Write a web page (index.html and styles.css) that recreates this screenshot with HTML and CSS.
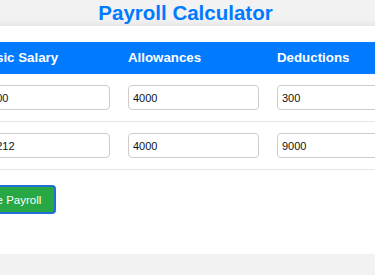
FILE: index.html
```html
<!DOCTYPE html>
<html lang="en">
    <head>
        <meta charset="UTF-8" />
        <title>Payroll Calculator</title>
        <link rel="stylesheet" href="styles.css">
    </head>
    <body>
        <h1>Payroll Calculator</h1>

        <div class="karta">
            <table class="mzdy">
                <thead>
                    <tr>
                        <th class="cislo">#</th>
                        <th>Basic Salary</th>
                        <th>Allowances</th>
                        <th>Deductions</th>
                    </tr>
                </thead>
                <tbody>
                    <tr>
                        <td class="cislo">1</td>
                        <td><input type="number" value="5000"></td>
                        <td><input type="number" value="4000"></td>
                        <td><input type="number" value="300"></td>
                    </tr>
                    <tr>
                        <td class="cislo">2</td>
                        <td><input type="number" value="41212"></td>
                        <td><input type="number" value="4000"></td>
                        <td><input type="number" value="9000"></td>
                    </tr>
                </tbody>
            </table>

            <button class="spocitat">Calculate Payroll</button>
        </div>
    </body>
</html>
```

FILE: styles.css
```css
body {
    margin: 0;
    background-color: #f2f2f2;
    font-family: "Liberation Sans", Arial, sans-serif;
    display: flex;
    flex-direction: column;
    align-items: center;
    overflow-x: hidden;
}

h1 {
    margin: 1px 0 2px 0;
    padding-right: 4px;
    font-size: 20.5px;
    line-height: 23px;
    color: #007bff;
    text-align: center;
    align-self: stretch;
}

.karta {
    flex: none;
    width: 499px;
    background-color: #fff;
    padding: 16px 20px 40px 20px;
    box-shadow: 0 0 8px rgba(0, 0, 0, 0.1);
}

.mzdy {
    width: 100%;
    border-collapse: collapse;
    table-layout: fixed;
}

.mzdy th {
    background-color: #007bff;
    color: #fff;
    font-size: 13.3px;
    line-height: 16px;
    text-align: left;
    padding: 8px 9px;
    width: 131px;
}

.mzdy th.cislo {
    width: 14px;
}

.mzdy th:last-child {
    width: auto;
}

.mzdy td {
    padding: 11px 9px;
    border-bottom: 1px solid #e6e6e6;
    font-size: 11px;
}

.mzdy input {
    box-sizing: border-box;
    width: 131px;
    height: 25px;
    padding: 0 4px;
    border: 1px solid #ccc;
    border-radius: 4px;
    font-family: "Liberation Sans", Arial, sans-serif;
    font-size: 11px;
    color: #111;
    -moz-appearance: textfield;
}

.mzdy input::-webkit-inner-spin-button,
.mzdy input::-webkit-outer-spin-button {
    -webkit-appearance: none;
    margin: 0;
}

.spocitat {
    margin: 15px 0 0 2px;
    height: 29px;
    padding: 0 13px;
    background-color: #28a745;
    color: #fff;
    border: 2px solid #1f6fd6;
    border-radius: 4px;
    font-family: "Liberation Sans", Arial, sans-serif;
    font-size: 11.5px;
}
```
